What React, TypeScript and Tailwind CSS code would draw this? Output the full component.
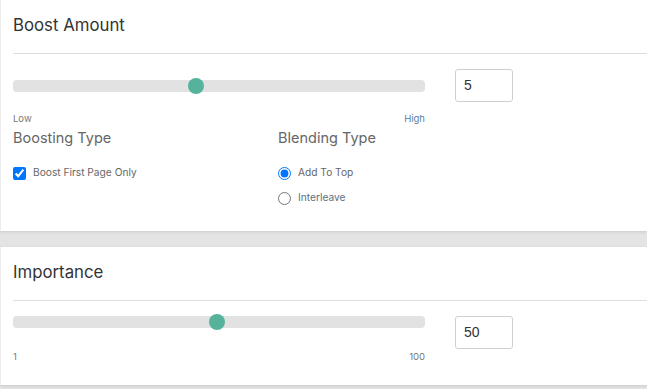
import React from "react";

const font = { fontFamily: "Inter, 'Open Sans', sans-serif" };

function Slider({ thumbLeft }: { thumbLeft: number }) {
  return (
    <div className="relative w-[412px] h-[12px] rounded-[4px] bg-[#e2e2e2]">
      <div
        className="absolute top-[-2px] w-[16px] h-[16px] rounded-full bg-[#55b39b]"
        style={{ left: thumbLeft }}
      />
    </div>
  );
}

function NumBox({ value }: { value: string }) {
  return (
    <div className="w-[58px] h-[33px] border border-[#cfcfcf] rounded-[3px] flex items-center pl-[8px] text-[14px] text-[#333]" style={{ fontFamily: "'Liberation Sans', Arial, sans-serif" }}>
      {value}
    </div>
  );
}

export default function App() {
  return (
    <div className="w-[647px] h-[389px] bg-[#e4e4e4] overflow-hidden" style={font}>
      {/* Card 1 */}
      <div className="bg-white h-[231px] shadow-[0_1px_3px_rgba(0,0,0,0.12)] border-l border-[#ececec]">
        <div className="h-[53px] pl-[12px] pt-[13px] text-[16.8px] leading-[24px] text-[#333]">Boost Amount</div>
        <div className="ml-[12px] border-t border-[#dedede]" />
        <div className="pl-[12px] pt-[15px] flex items-start gap-[30px]">
          <div className="w-[412px]">
            <div className="h-[33px] flex items-center">
              <Slider thumbLeft={175} />
            </div>
            <div className="flex justify-between text-[9.5px] leading-[12px] text-[#777] mt-[11px]">
              <span>Low</span>
              <span className="text-[#5e7d9c]">High</span>
            </div>
          </div>
          <NumBox value="5" />
        </div>
        <div className="pl-[12px] flex mt-[3px]">
          <div className="w-[265px]">
            <div className="text-[14.5px] leading-[20px] text-[#666]">Boosting Type</div>
            <label className="flex items-center gap-[7px] mt-[18px] h-[14px]">
              <input type="checkbox" defaultChecked className="w-[13px] h-[13px] m-0 accent-[#0075ff]" />
              <span className="text-[10.2px] text-[#666]">Boost First Page Only</span>
            </label>
          </div>
          <div>
            <div className="text-[14.5px] leading-[20px] text-[#666]">Blending Type</div>
            <label className="flex items-center gap-[7px] mt-[18px] h-[14px]">
              <input type="radio" name="blend" defaultChecked className="w-[13px] h-[13px] m-0 accent-[#0075ff]" />
              <span className="text-[10.2px] text-[#666]">Add To Top</span>
            </label>
            <label className="flex items-center gap-[7px] mt-[11px] h-[14px]">
              <input type="radio" name="blend" className="w-[13px] h-[13px] m-0" />
              <span className="text-[10.2px] text-[#5e6f80]">Interleave</span>
            </label>
          </div>
        </div>
      </div>

      {/* Card 2 */}
      <div className="bg-white h-[138px] mt-[16px] shadow-[0_1px_3px_rgba(0,0,0,0.12)] border-l border-[#ececec]">
        <div className="h-[53px] pl-[12px] pt-[13px] text-[16.8px] leading-[24px] text-[#333]">Importance</div>
        <div className="ml-[12px] border-t border-[#dedede]" />
        <div className="pl-[12px] pt-[15px] flex items-start gap-[30px]">
          <div className="w-[412px]">
            <Slider thumbLeft={196} />
            <div className="flex justify-between text-[9.5px] leading-[12px] text-[#777] mt-[23px]">
              <span>1</span>
              <span>100</span>
            </div>
          </div>
          <NumBox value="50" />
        </div>
      </div>
    </div>
  );
}
